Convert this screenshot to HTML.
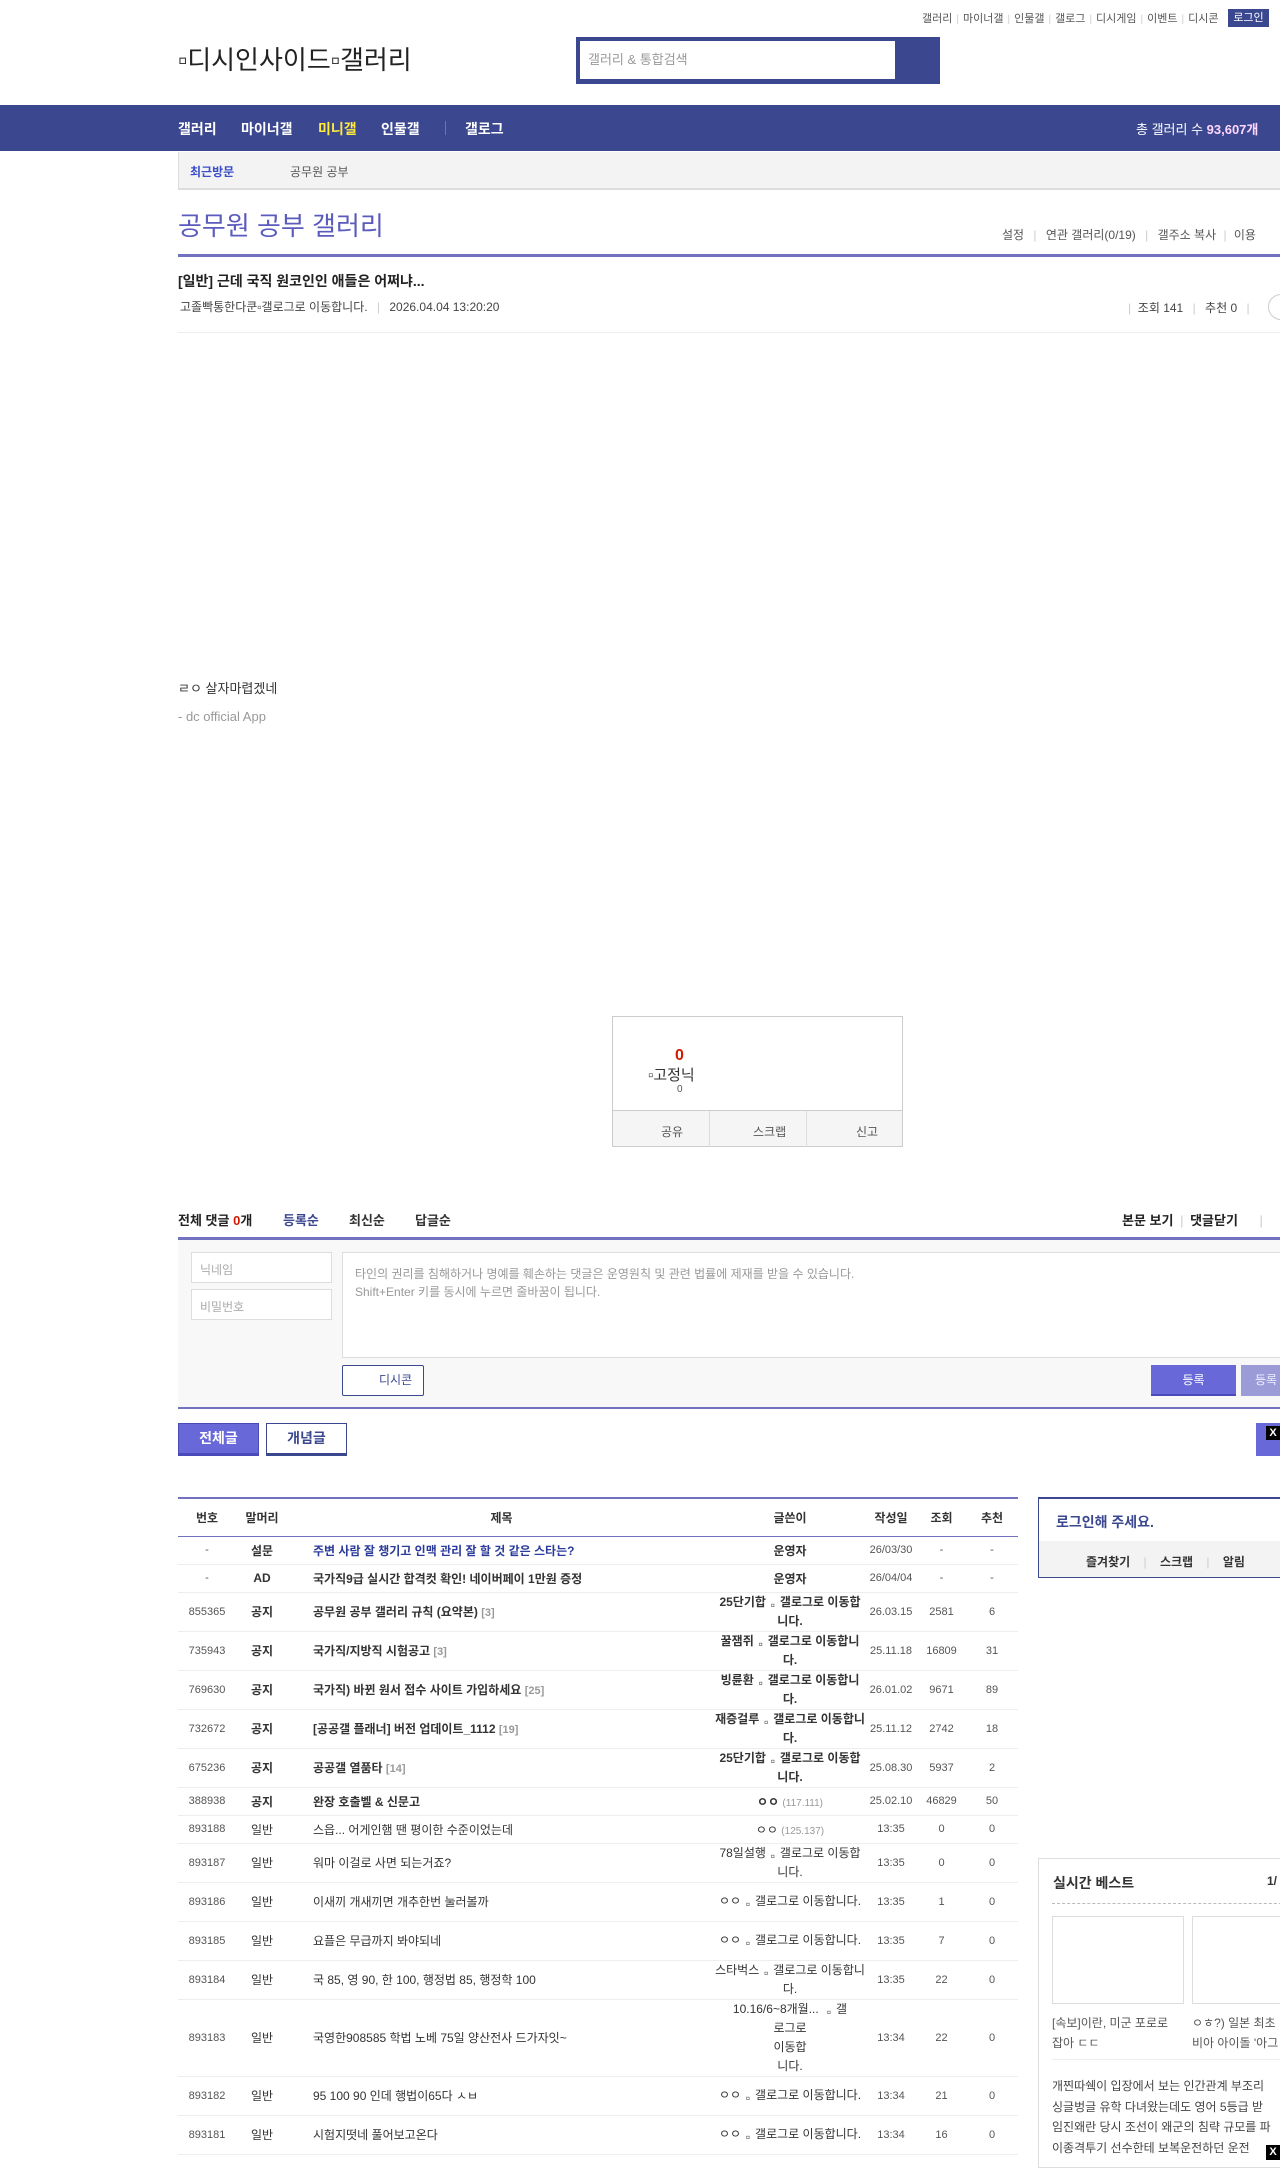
<!DOCTYPE html>
<html><head><meta charset="utf-8">
<style>
*{margin:0;padding:0;box-sizing:border-box}
body{width:1280px;height:2160px;overflow:hidden;position:relative;background:#fff;font-family:"Liberation Sans","Noto Sans CJK KR",sans-serif;color:#333;font-size:12px}
.a{position:absolute;white-space:nowrap}
.top a{color:#555;font-size:11px;margin:0 4px}
.top i{color:#ccc;font-style:normal;font-size:10px}
.nav span{position:absolute;top:14px;color:#fff;font-size:14px;font-weight:bold}
table{border-collapse:collapse;position:absolute;left:178px;top:1497px;width:840px;border-top:2px solid #7272c0;table-layout:fixed}
td,th{font-size:12px;text-align:center;border-bottom:1px solid #eee;padding:0}
th{height:38px;font-weight:bold;color:#333;border-bottom:1px solid #7272c0}
td.t{text-align:left;padding-left:25px;white-space:nowrap}
td.n{font-size:11px;color:#555}
td.w{font-size:12px;line-height:19px}
td.w b{font-weight:bold}
.ic{display:inline-block;width:14px;height:16px;vertical-align:-3px}
.c{color:#999;font-size:11px}
.b{font-weight:bold}
</style></head><body>
<div class="a top" style="top:10px;left:918px">
<a>갤러리</a><i>|</i><a>마이너갤</a><i>|</i><a>인물갤</a><i>|</i><a>갤로그</a><i>|</i><a>디시게임</a><i>|</i><a>이벤트</a><i>|</i><a>디시콘</a></div>
<div class="a" style="left:1228px;top:9px;width:41px;height:18px;background:#3b4890;color:#fff;font-size:11px;text-align:center;line-height:18px">로그인</div>
<div class="a" style="left:178px;top:40px;font-size:26px;color:#222">▫디시인사이드▫갤러리</div>
<div class="a" style="left:576px;top:37px;width:364px;height:47px;background:#3b4890"></div>
<div class="a" style="left:580px;top:41px;width:315px;height:38px;background:#fff;color:#999;font-size:13px;line-height:38px;padding-left:8px">갤러리 &amp; 통합검색</div>
<div class="a nav" style="left:0;top:105px;width:1280px;height:46px;background:#3b4890">
<span style="left:178px">갤러리</span><span style="left:241px">마이너갤</span><span style="left:318px;color:#ffeb3b">미니갤</span><span style="left:381px">인물갤</span>
<span style="left:445px;top:16px;width:1px;height:14px;background:#6a76b0"></span>
<span style="left:465px">갤로그</span>
<span style="left:1136px;font-weight:normal;font-size:13px">총 갤러리 수 <b style="color:#ffd7ff">93,607개</b></span></div>
<div class="a" style="left:178px;top:152px;width:1102px;height:38px;background:#f3f3f3;border-left:1px solid #ddd;border-bottom:2px solid #ddd"></div>
<div class="a" style="left:190px;top:163px;font-size:12px;color:#3b4dc9;font-weight:bold">최근방문</div>
<div class="a" style="left:290px;top:163px;font-size:12px;color:#555">공무원 공부</div>
<div class="a" style="left:178px;top:206px;font-size:26px;color:#5b5bbd">공무원 공부 갤러리</div>
<div class="a" style="left:1002px;top:226px;font-size:12px;color:#555">설정 <span style="color:#ccc;margin:0 6px">|</span> 연관 갤러리(0/19) <span style="color:#ccc;margin:0 6px">|</span> 갤주소 복사 <span style="color:#ccc;margin:0 4px">|</span> 이용</div>
<div class="a" style="left:178px;top:254px;width:1102px;height:3px;background:#7272c0"></div>
<div class="a" style="left:178px;top:271px;font-size:14px;font-weight:bold;color:#222">[일반] 근데 국직 원코인인 애들은 어쩌냐...</div>
<div class="a" style="left:180px;top:298px;font-size:12px;color:#444">고졸빡통한다쿤▫갤로그로 이동합니다. <span style="color:#ccc;margin:0 6px">|</span> 2026.04.04 13:20:20</div>
<div class="a" style="left:1128px;top:299px;font-size:12px;color:#444"><span style="color:#ccc">|</span> &nbsp;조회 141 <span style="color:#ccc;margin:0 6px">|</span> 추천 0 <span style="color:#ccc;margin:0 6px">|</span></div>
<div class="a" style="left:1268px;top:294px;width:26px;height:26px;border:1px solid #ccc;border-radius:50%"></div>
<div class="a" style="left:178px;top:332px;width:1102px;height:1px;background:#eee"></div>
<div class="a" style="left:178px;top:678px;font-size:13px;color:#333">ㄹㅇ 살자마렵겠네</div>
<div class="a" style="left:178px;top:709px;font-size:13px;color:#999">- dc official App</div>
<div class="a" style="left:612px;top:1016px;width:291px;height:131px;border:1px solid #ccc"></div>
<div class="a" style="left:613px;top:1110px;width:289px;height:36px;background:#f5f5f5;border-top:1px solid #ccc"></div>
<div class="a" style="left:709px;top:1111px;width:1px;height:36px;background:#ddd"></div>
<div class="a" style="left:806px;top:1111px;width:1px;height:36px;background:#ddd"></div>
<div class="a" style="left:661px;top:1123px;font-size:12px;color:#555">공유</div>
<div class="a" style="left:753px;top:1123px;font-size:12px;color:#555">스크랩</div>
<div class="a" style="left:856px;top:1123px;font-size:12px;color:#555">신고</div>
<div class="a" style="left:675px;top:1047px;font-size:16px;font-weight:bold;color:#d31900">0</div>
<div class="a" style="left:648px;top:1064px;font-size:15px;color:#333">▫고정닉</div>
<div class="a" style="left:677px;top:1084px;font-size:10px;color:#555">0</div>
<div class="a" style="left:178px;top:1210px;font-size:13px;font-weight:bold;color:#222">전체 댓글 <span style="color:#d31900">0</span>개</div>
<div class="a" style="left:283px;top:1210px;font-size:13px;font-weight:bold;color:#3b4890">등록순</div>
<div class="a" style="left:349px;top:1210px;font-size:13px;font-weight:bold;color:#333">최신순</div>
<div class="a" style="left:415px;top:1210px;font-size:13px;font-weight:bold;color:#333">답글순</div>
<div class="a" style="left:1122px;top:1210px;font-size:13px;font-weight:bold;color:#222">본문 보기 <span style="color:#ccc;font-weight:normal;margin:0 3px">|</span> 댓글닫기 <span style="color:#ccc;font-weight:normal;margin-left:18px">|</span></div>
<div class="a" style="left:178px;top:1237px;width:1102px;height:172px;background:#f8f8f8;border-top:3px solid #7272c0;border-bottom:2px solid #7272c0"></div>
<div class="a" style="left:191px;top:1252px;width:141px;height:31px;background:#fff;border:1px solid #ddd;color:#aaa;padding:8px;font-size:12px">닉네임</div>
<div class="a" style="left:191px;top:1289px;width:141px;height:31px;background:#fff;border:1px solid #ddd;color:#aaa;padding:8px;font-size:12px">비밀번호</div>
<div class="a" style="left:342px;top:1252px;width:950px;height:106px;background:#fff;border:1px solid #ddd;color:#999;padding:12px 12px;font-size:12px;line-height:18px">타인의 권리를 침해하거나 명예를 훼손하는 댓글은 운영원칙 및 관련 법률에 제재를 받을 수 있습니다.<br>Shift+Enter 키를 동시에 누르면 줄바꿈이 됩니다.</div>
<div class="a" style="left:342px;top:1365px;width:82px;height:31px;background:#fff;border:1px solid #3b4890;border-radius:2px;color:#3b4890;font-size:12px;line-height:29px;padding-left:36px">디시콘</div>
<div class="a" style="left:1151px;top:1365px;width:85px;height:31px;background:#6868d8;border-bottom:2px solid #4a4ab8;color:#fff;font-size:12px;text-align:center;line-height:30px">등록</div>
<div class="a" style="left:1241px;top:1365px;width:60px;height:31px;background:#9b9bd8;color:#eef;font-size:12px;line-height:30px;padding-left:14px">등록</div>
<div class="a" style="left:178px;top:1423px;width:81px;height:33px;background:#6868d8;border:1px solid #4a4ab8;border-bottom:3px solid #4a4ab8;color:#fff;font-weight:bold;font-size:14px;text-align:center;line-height:29px">전체글</div>
<div class="a" style="left:266px;top:1423px;width:81px;height:33px;background:#fff;border:1px solid #3b4890;border-bottom:3px solid #3b4890;color:#3b4890;font-weight:bold;font-size:14px;text-align:center;line-height:29px">개념글</div>
<div class="a" style="left:1256px;top:1423px;width:30px;height:33px;background:#6868d8"></div>
<div class="a" style="left:1266px;top:1426px;width:14px;height:14px;background:#000;color:#fff;font-size:11px;font-weight:bold;text-align:center;line-height:14px">X</div>
<table>
<colgroup><col style="width:58px"><col style="width:52px"><col style="width:427px"><col style="width:150px"><col style="width:52px"><col style="width:49px"><col style="width:52px"></colgroup>
<tr><th>번호</th><th>말머리</th><th>제목</th><th>글쓴이</th><th>작성일</th><th>조회</th><th>추천</th></tr>
<tr style="height:28px"><td class="n">-</td><td class="b">설문</td><td class="t b" style="color:#2a3a9a">주변 사람 잘 챙기고 인맥 관리 잘 할 것 같은 스타는?</td><td class="b">운영자</td><td class="n">26/03/30</td><td class="n">-</td><td class="n">-</td></tr>
<tr style="height:28px"><td class="n">-</td><td class="b">AD</td><td class="t b">국가직9급 실시간 합격컷 확인! 네이버페이 1만원 증정</td><td class="b">운영자</td><td class="n">26/04/04</td><td class="n">-</td><td class="n">-</td></tr>
<tr style="height:38px"><td class="n">855365</td><td class="b">공지</td><td class="t b">공무원 공부 갤러리 규칙 (요약본) <span class="c">[3]</span></td><td class="w"><b>25단기합</b><span class="ic">▫</span><b>갤로그로 이동합니다.</b></td><td class="n">26.03.15</td><td class="n">2581</td><td class="n">6</td></tr>
<tr style="height:39px"><td class="n">735943</td><td class="b">공지</td><td class="t b">국가직/지방직 시험공고 <span class="c">[3]</span></td><td class="w"><b>꿀잼쥐</b><span class="ic">▫</span><b>갤로그로 이동합니다.</b></td><td class="n">25.11.18</td><td class="n">16809</td><td class="n">31</td></tr>
<tr style="height:39px"><td class="n">769630</td><td class="b">공지</td><td class="t b">국가직) 바뀐 원서 접수 사이트 가입하세요 <span class="c">[25]</span></td><td class="w"><b>빙륜환</b><span class="ic">▫</span><b>갤로그로 이동합니다.</b></td><td class="n">26.01.02</td><td class="n">9671</td><td class="n">89</td></tr>
<tr style="height:39px"><td class="n">732672</td><td class="b">공지</td><td class="t b">[공공갤 플래너] 버전 업데이트_1112 <span class="c">[19]</span></td><td class="w"><b>재증걸루</b><span class="ic">▫</span><b>갤로그로 이동합니다.</b></td><td class="n">25.11.12</td><td class="n">2742</td><td class="n">18</td></tr>
<tr style="height:39px"><td class="n">675236</td><td class="b">공지</td><td class="t b">공공갤 열품타 <span class="c">[14]</span></td><td class="w"><b>25단기합</b><span class="ic">▫</span><b>갤로그로 이동합니다.</b></td><td class="n">25.08.30</td><td class="n">5937</td><td class="n">2</td></tr>
<tr style="height:28px"><td class="n">388938</td><td class="b">공지</td><td class="t b">완장 호출벨 &amp; 신문고</td><td><b>ㅇㅇ</b> <span class="c" style="font-size:10px">(117.111)</span></td><td class="n">25.02.10</td><td class="n">46829</td><td class="n">50</td></tr>
<tr style="height:28px"><td class="n">893188</td><td>일반</td><td class="t">스읍... 어게인햄 땐 평이한 수준이었는데</td><td>ㅇㅇ <span class="c" style="font-size:10px">(125.137)</span></td><td class="n">13:35</td><td class="n">0</td><td class="n">0</td></tr>
<tr style="height:39px"><td class="n">893187</td><td>일반</td><td class="t">워마 이걸로 사면 되는거죠?</td><td class="w">78일설행<span class="ic">▫</span>갤로그로 이동합니다.</td><td class="n">13:35</td><td class="n">0</td><td class="n">0</td></tr>
<tr style="height:39px"><td class="n">893186</td><td>일반</td><td class="t">이새끼 개새끼면 개추한번 눌러볼까</td><td class="w">ㅇㅇ<span class="ic">▫</span>갤로그로 이동합니다.</td><td class="n">13:35</td><td class="n">1</td><td class="n">0</td></tr>
<tr style="height:39px"><td class="n">893185</td><td>일반</td><td class="t">요플은 무급까지 봐야되네</td><td class="w">ㅇㅇ<span class="ic">▫</span>갤로그로 이동합니다.</td><td class="n">13:35</td><td class="n">7</td><td class="n">0</td></tr>
<tr style="height:39px"><td class="n">893184</td><td>일반</td><td class="t">국 85, 영 90, 한 100, 행정법 85, 행정학 100</td><td class="w">스타벅스<span class="ic">▫</span>갤로그로 이동합니다.</td><td class="n">13:35</td><td class="n">22</td><td class="n">0</td></tr>
<tr style="height:75px"><td class="n">893183</td><td>일반</td><td class="t">국영한908585 학법 노베 75일 양산전사 드가자잇~</td><td class="w">10.16/6~8개월... <span class="ic">▫</span>갤<br>로그로<br>이동합<br>니다.</td><td class="n">13:34</td><td class="n">22</td><td class="n">0</td></tr>
<tr style="height:39px"><td class="n">893182</td><td>일반</td><td class="t">95 100 90 인데 행법이65다 ㅅㅂ</td><td class="w">ㅇㅇ<span class="ic">▫</span>갤로그로 이동합니다.</td><td class="n">13:34</td><td class="n">21</td><td class="n">0</td></tr>
<tr style="height:39px"><td class="n">893181</td><td>일반</td><td class="t">시험지떳네 풀어보고온다</td><td class="w">ㅇㅇ<span class="ic">▫</span>갤로그로 이동합니다.</td><td class="n">13:34</td><td class="n">16</td><td class="n">0</td></tr>
</table>
<div class="a" style="left:1038px;top:1497px;width:260px;height:81px;border:1px solid #3b4890;border-top-width:2px"></div>
<div class="a" style="left:1039px;top:1541px;width:260px;height:36px;background:#f3f3f3"></div>
<div class="a" style="left:1056px;top:1512px;font-size:14px;font-weight:bold;color:#3b4890">로그인해 주세요.</div>
<div class="a" style="left:1086px;top:1553px;font-size:12px;font-weight:bold;color:#333">즐겨찾기 <span style="color:#ccc;font-weight:normal;margin:0 10px">|</span> 스크랩 <span style="color:#ccc;font-weight:normal;margin:0 10px">|</span> 알림</div>
<div class="a" style="left:1038px;top:1858px;width:260px;height:310px;border:1px solid #ddd"></div>
<div class="a" style="left:1053px;top:1873px;font-size:14px;font-weight:bold;color:#333">실시간 베스트</div>
<div class="a" style="left:1267px;top:1874px;font-size:12px;font-weight:bold;color:#333">1/</div>
<div class="a" style="left:1052px;top:1903px;width:240px;border-top:1px dashed #bbb"></div>
<div class="a" style="left:1052px;top:1916px;width:132px;height:88px;border:1px solid #ddd"></div>
<div class="a" style="left:1192px;top:1916px;width:100px;height:88px;border:1px solid #ddd"></div>
<div class="a" style="left:1052px;top:2013px;font-size:12px;color:#555;line-height:20px">[속보]이란, 미군 포로로<br>잡아 ㄷㄷ</div>
<div class="a" style="left:1192px;top:2013px;font-size:12px;color:#555;line-height:20px">ㅇㅎ?) 일본 최초<br>비아 아이돌 '아그</div>
<div class="a" style="left:1052px;top:2059px;width:240px;height:1px;background:#eee"></div>
<div class="a" style="left:1052px;top:2076px;font-size:12px;color:#444;line-height:20.5px">개찐따쉑이 입장에서 보는 인간관계 부조리<br>싱글벙글 유학 다녀왔는데도 영어 5등급 받<br>임진왜란 당시 조선이 왜군의 침략 규모를 파<br>이종격투기 선수한테 보복운전하던 운전</div>
<div class="a" style="left:1266px;top:2145px;width:14px;height:15px;background:#000;color:#fff;font-size:11px;font-weight:bold;text-align:center;line-height:15px">X</div>
</body></html>
